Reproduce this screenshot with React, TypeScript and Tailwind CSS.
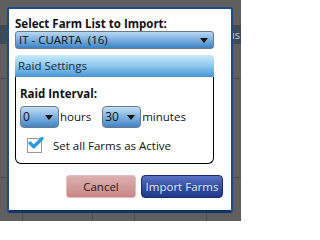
import { Check } from "lucide-react";

function Caret() {
  return (
    <svg width="8" height="5" viewBox="0 0 8 5" className="shrink-0">
      <path d="M0 0h8L4 5z" fill="#111" />
    </svg>
  );
}

function SmallSelect({ value }: { value: string }) {
  return (
    <div className="flex h-[22px] w-[39px] items-center justify-between rounded-[4px] border border-[#6b7a8a] bg-gradient-to-b from-[#c3def4] via-[#7fb2df] to-[#3f84c4] pl-[2px] pr-[5px] text-[12px] leading-none text-[#111]">
      <span>{value}</span>
      <Caret />
    </div>
  );
}

export default function App() {
  return (
    <div
      className="relative h-[221px] w-[241px] overflow-hidden bg-[#5f5f5f]"
      style={{ fontFamily: '"Open Sans", "Noto Sans", sans-serif' }}
    >
      {/* page behind the dialog */}
      <div className="absolute left-0 top-[25px] h-px w-full bg-[#474747]" />
      <div className="absolute left-0 top-[26px] h-[18px] w-full bg-[#3c4956]" />
      <div className="absolute left-[228px] top-[28px] text-[11px] leading-[14px] text-[#c9d1d9]">us</div>
      <div className="absolute left-0 top-[78px] h-px w-full bg-[#4c4c4c]" />
      <div className="absolute left-0 top-[177px] h-px w-full bg-[#4c4c4c]" />
      <div className="absolute left-[22px] top-[200px] h-[21px] w-px bg-[#4a4a4a]" />
      <div className="absolute left-[92px] top-[200px] h-[21px] w-px bg-[#4a4a4a]" />
      <div className="absolute left-[134px] top-[200px] h-[21px] w-px bg-[#4a4a4a]" />
      <div className="absolute left-[206px] top-[200px] h-[21px] w-px bg-[#4a4a4a]" />

      {/* dialog */}
      <div className="absolute left-[7px] top-[7px] flex h-[206px] w-[226px] flex-col rounded-[3px] border-2 border-b-[3px] border-[#1c4c8a] border-b-[#12336a] bg-white pl-[6px] pr-[8px] pt-[7px]">
        <div className="text-[11.5px] font-bold leading-[15px] text-[#111]">Select Farm List to Import:</div>

        <div className="flex h-[18px] w-[199px] items-center justify-between rounded-[3px] border border-[#6b7a8a] bg-gradient-to-b from-[#b9d8f1] via-[#79aedd] to-[#3c83c4] pl-[3px] pr-[5px] text-[11.5px] leading-none text-[#111]">
          <span className="whitespace-pre">IT - CUARTA  (16)</span>
          <Caret />
        </div>

        <div className="mt-[6px] w-[199px]">
          <div className="flex h-[22px] items-center rounded-t-[4px] bg-gradient-to-b from-[#c8ebfb] via-[#8cc6ec] to-[#4796d3] pl-[3px] text-[11.5px] text-[#1d2b38]">
            Raid Settings
          </div>
          <div className="flex h-[87px] flex-col rounded-b-[6px] border border-t-0 border-black px-[4px] pt-[9px]">
            <div className="text-[11.5px] font-bold leading-[15px] text-[#111]">Raid Interval:</div>
            <div className="mt-[5px] flex items-center text-[11.5px] text-[#111]">
              <SmallSelect value="0" />
              <span className="ml-[1px]">hours</span>
              <div className="ml-[11px]">
                <SmallSelect value="30" />
              </div>
              <span className="ml-[1px]">minutes</span>
            </div>
            <div className="mt-[9px] flex items-center pl-[7px] text-[11.5px] text-[#111]">
              <div className="relative h-[15px] w-[15px] border border-[#9a9a9a] bg-white">
                <Check
                  className="absolute -left-[1px] -top-[5px] h-[18px] w-[18px] text-[#2a9de2]"
                  strokeWidth={4.5}
                />
              </div>
              <span className="ml-[11px]">Set all Farms as Active</span>
            </div>
          </div>
        </div>

        <div className="mt-[11px] flex justify-end gap-[5px]">
          <div className="flex h-[23px] w-[70px] items-center justify-center rounded-[3px] border border-[#e6bcbc] bg-gradient-to-b from-[#dcb0b0] to-[#c98787] text-[11.5px] text-[#2a1818]">
            Cancel
          </div>
          <div className="flex h-[23px] w-[82px] items-center justify-center rounded-[4px] border border-[#1b2b6e] bg-gradient-to-b from-[#5b73c4] via-[#34509f] to-[#1d3a8c] text-[11.5px] text-[#dfe6ff]">
            Import Farms
          </div>
        </div>
      </div>
    </div>
  );
}
